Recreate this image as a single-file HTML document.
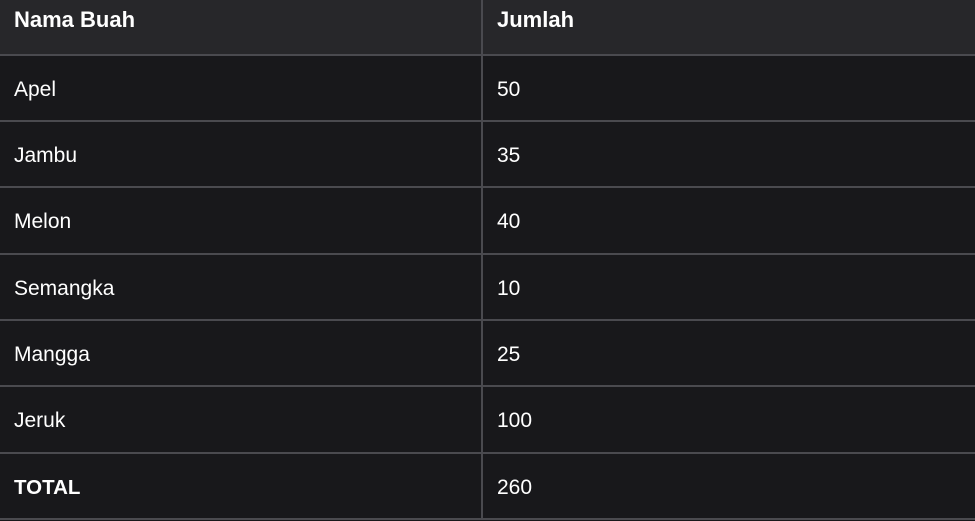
<!DOCTYPE html>
<html><head><style>
body{margin:0;width:975px;height:521px;background:#18181b;overflow:hidden;font-family:"Liberation Sans",sans-serif;color:#fff;position:relative}
.h{position:absolute;left:0;top:0;width:975px;height:54px;background:#27272a}
.l{position:absolute;left:0;width:975px;height:2px;background:#4a4a4f}
.v{position:absolute;left:481px;top:0;width:2px;height:519px;background:#4a4a4f}
.t{position:absolute;font-size:21px;line-height:24px}
.b{font-weight:bold}
.hd{font-size:22px}
</style></head><body>
<div class="h"></div>
<div class="l" style="top:54px"></div>
<div class="l" style="top:120px"></div>
<div class="l" style="top:186px"></div>
<div class="l" style="top:253px"></div>
<div class="l" style="top:319px"></div>
<div class="l" style="top:385px"></div>
<div class="l" style="top:452px"></div>
<div class="l" style="top:518px"></div>
<div class="v"></div>
<div class="t b hd" style="left:14px;top:8px">Nama Buah</div><div class="t b hd" style="left:497px;top:8px">Jumlah</div>
<div class="t" style="left:14px;top:78px">Apel</div><div class="t" style="left:497px;top:78px">50</div>
<div class="t" style="left:14px;top:144px">Jambu</div><div class="t" style="left:497px;top:144px">35</div>
<div class="t" style="left:14px;top:210px">Melon</div><div class="t" style="left:497px;top:210px">40</div>
<div class="t" style="left:14px;top:277px">Semangka</div><div class="t" style="left:497px;top:277px">10</div>
<div class="t" style="left:14px;top:343px">Mangga</div><div class="t" style="left:497px;top:343px">25</div>
<div class="t" style="left:14px;top:409px">Jeruk</div><div class="t" style="left:497px;top:409px">100</div>
<div class="t b" style="left:14px;top:476px;font-size:20.5px">TOTAL</div><div class="t" style="left:497px;top:476px">260</div>
</body></html>
